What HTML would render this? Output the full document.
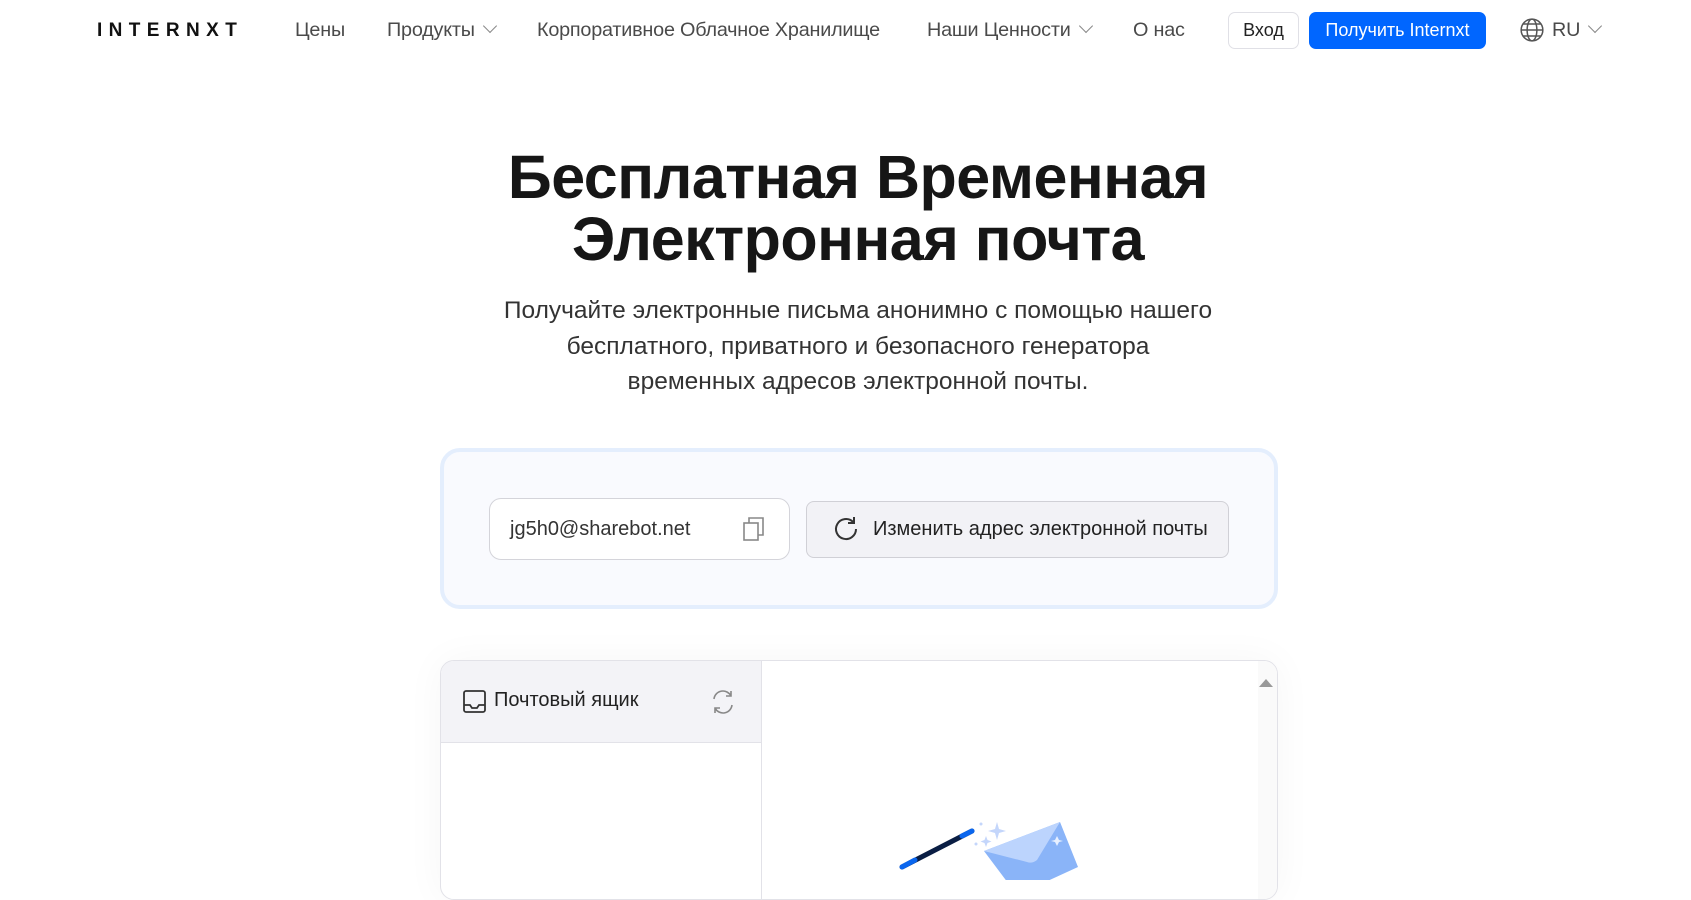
<!DOCTYPE html>
<html><head><meta charset="utf-8"><style>
*{margin:0;padding:0;box-sizing:border-box}
body{width:1691px;height:880px;overflow:hidden;background:#fff;font-family:"Liberation Sans",sans-serif;color:#1c1c1c;position:relative}
.a{position:absolute;white-space:nowrap}
.nav{font-size:19.8px;color:#4a4a4a;top:19px;letter-spacing:-0.2px}
.chev{display:inline-block;width:10px;height:10px;border-right:1.5px solid #888;border-bottom:1.5px solid #888;transform:rotate(45deg);margin-left:10px;position:relative;top:-5px}
h1{position:absolute;left:0;width:1716px;top:146px;text-align:center;font-size:61px;line-height:62px;font-weight:bold;color:#161616;letter-spacing:-0.5px}
.sub{position:absolute;left:0;width:1716px;top:293px;text-align:center;font-size:24.5px;line-height:35.6px;color:#333}
</style></head><body>
<div class="a" style="left:97px;top:20px;font-size:19px;font-weight:bold;letter-spacing:6.4px;color:#111">INTERNXT</div>
<div class="a nav" style="left:295px">Цены</div>
<div class="a nav" style="left:387px">Продукты<span class="chev"></span></div>
<div class="a nav" style="left:537px">Корпоративное Облачное Хранилище</div>
<div class="a nav" style="left:927px">Наши Ценности<span class="chev"></span></div>
<div class="a nav" style="left:1133px">О нас</div>
<div class="a" style="left:1228px;top:12px;width:71px;height:37px;border:1px solid #e0e0e6;border-radius:7px;font-size:18px;line-height:35px;text-align:center;color:#222">Вход</div>
<div class="a" style="left:1309px;top:12px;width:177px;height:37px;background:#0066ff;border-radius:7px;font-size:18px;line-height:37px;text-align:center;color:#fff">Получить Internxt</div>
<svg class="a" style="left:1519px;top:17px" width="26" height="26" viewBox="0 0 24 24" fill="none" stroke="#555" stroke-width="1.4"><circle cx="12" cy="12" r="10"/><ellipse cx="12" cy="12" rx="4.5" ry="10"/><path d="M2 12h20M4 6.5h16M4 17.5h16"/></svg>
<div class="a nav" style="left:1552px">RU<span class="chev"></span></div>

<h1>Бесплатная Временная<br>Электронная почта</h1>
<div class="sub">Получайте электронные письма анонимно с помощью нашего<br>бесплатного, приватного и безопасного генератора<br>временных адресов электронной почты.</div>

<div class="a" style="left:440px;top:448px;width:838px;height:161px;border:4px solid #e4eefd;border-radius:20px;background:#f9fafe"></div>
<div class="a" style="left:489px;top:498px;width:301px;height:62px;border:1px solid #d4d4da;border-radius:12px;background:#fff;font-size:20px;line-height:60px;padding-left:20px;color:#333">jg5h0@sharebot.net</div>
<svg class="a" style="left:742px;top:515px" width="26" height="28" viewBox="0 0 26 28" fill="none" stroke="#888" stroke-width="1.6"><rect x="2" y="8" width="14" height="17"/><path d="M7 8V3h14v17h-5"/></svg>
<div class="a" style="left:806px;top:501px;width:423px;height:57px;border:1px solid #d0d0d6;border-radius:8px;background:#f2f2f6;font-size:20px;line-height:55px;padding-left:66px;color:#222">Изменить адрес электронной почты</div>
<svg class="a" style="left:833px;top:515px" width="28" height="28" viewBox="0 0 28 28" fill="none" stroke="#333" stroke-width="2"><path d="M23 14a10 10 0 1 1-3-7.1"/><path d="M21 2v6h-6"/></svg>

<div class="a" style="left:440px;top:660px;width:838px;height:240px;border:1px solid #e2e2e8;border-radius:14px;background:#fff;overflow:hidden;box-shadow:0 0 40px rgba(0,0,0,0.04)">
<div style="position:absolute;left:0;top:0;width:320px;height:82px;background:#f3f3f7;border-bottom:1px solid #e2e2e8"></div>
<div style="position:absolute;left:320px;top:0;width:1px;height:240px;background:#e2e2e8"></div>
<div style="position:absolute;right:0;top:0;width:19px;height:240px;background:#fafafa"></div>
<div style="position:absolute;right:4px;top:18px;width:0;height:0;border-left:7px solid transparent;border-right:7px solid transparent;border-bottom:8px solid #999"></div>
</div>
<svg class="a" style="left:462px;top:689px" width="26" height="26" viewBox="0 0 26 26" fill="none" stroke="#333" stroke-width="1.8"><rect x="2" y="2" width="21" height="21" rx="2"/><path d="M2 16h6l2 3h5l2-3h6"/></svg>
<div class="a" style="left:494px;top:689px;font-size:20px;color:#222">Почтовый ящик</div>
<svg class="a" style="left:709px;top:687px" width="28" height="30" viewBox="0 0 28 30" fill="none" stroke="#888" stroke-width="1.6"><path d="M5 12a9 9 0 0 1 17-3M22 4v5h-5"/><path d="M23 18a9 9 0 0 1-17 3M6 26v-5h5"/></svg>

<svg class="a" style="left:877px;top:800px" width="240" height="80" viewBox="0 0 240 80">
<line x1="25" y1="67" x2="95" y2="31" stroke="#0a1e44" stroke-width="5" stroke-linecap="round"/>
<line x1="25" y1="67" x2="38" y2="60" stroke="#0a66ee" stroke-width="5" stroke-linecap="round"/>
<line x1="85" y1="36" x2="95" y2="31" stroke="#0a66ee" stroke-width="5" stroke-linecap="round"/>
<path d="M120 22l2 7 7 2-7 2-2 7-2-7-7-2 7-2z" fill="#c4d6fb"/>
<path d="M109 36l1.5 4 4 1.5-4 1.5-1.5 4-1.5-4-4-1.5 4-1.5z" fill="#c4d6fb"/>
<circle cx="104" cy="24" r="1.5" fill="#c4d6fb"/><circle cx="99" cy="44" r="1.5" fill="#c4d6fb"/>
<path d="M107 51L183 22L201 67L140 95Z" fill="#8ab4f8"/>
<path d="M107 51L183 22L160 60Q155 64 150 62Z" fill="#bcd4fd"/>
<path d="M180 36l2 4 4 1-4 1-2 4-2-4-4-1 4-1z" fill="#e8f0ff"/>
</svg>
</body></html>
